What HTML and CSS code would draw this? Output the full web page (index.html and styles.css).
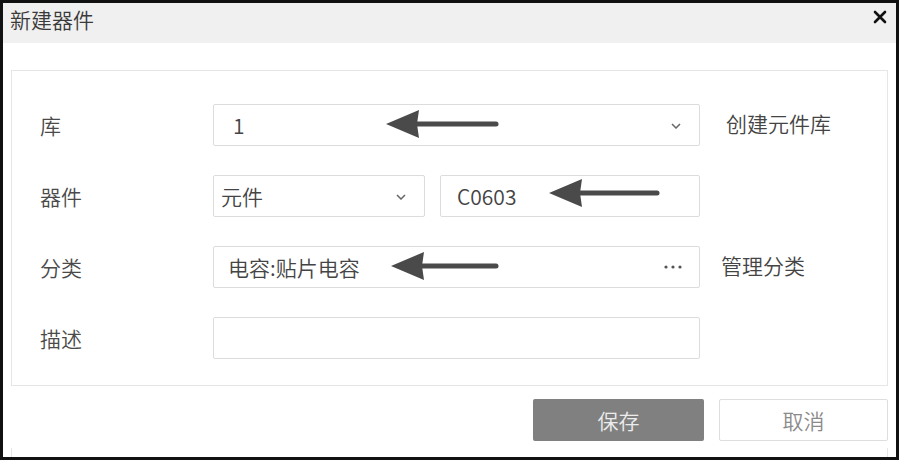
FILE: index.html
```html
<!DOCTYPE html>
<html>
    <head>
        <meta charset="utf-8" />
        <title>新建器件</title>
        <link rel="stylesheet" href="styles.css">
    </head>

    <body>
        <div class="m-dialog">
            <div class="hd">
                <span class="title">新建器件</span>
                <svg class="close" width="14" height="14" viewBox="0 0 14 14"><path d="M2 2L12 12M12 2L2 12" stroke="#111" stroke-width="2.6" stroke-linecap="round"/></svg>
            </div>

            <div class="bd">
                <div class="row">
                    <span class="label">库</span>
                    <div class="field w-full">
                        <span class="val pl-19">1</span>
                        <svg class="chev" width="10" height="6" viewBox="0 0 10 6"><path d="M1 1L5 5L9 1" fill="none" stroke="#666" stroke-width="1.5"/></svg>
                        <svg class="arrow" style="left:172px;top:5px" width="116" height="28" viewBox="0 0 116 28"><polygon points="0,14 33,0 31,14 33,28" fill="#4a4a4a"/><path d="M30 14L110 14" stroke="#4a4a4a" stroke-width="5" stroke-linecap="round"/></svg>
                    </div>
                    <a class="link ml-26">创建元件库</a>
                </div>

                <div class="row">
                    <span class="label">器件</span>
                    <div class="field w-sel">
                        <span class="val pl-8">元件</span>
                        <svg class="chev" width="10" height="6" viewBox="0 0 10 6"><path d="M1 1L5 5L9 1" fill="none" stroke="#666" stroke-width="1.5"/></svg>
                    </div>
                    <div class="field w-code">
                        <span class="val pl-16">C0603</span>
                        <svg class="arrow" style="left:108px;top:3px" width="116" height="28" viewBox="0 0 116 28"><polygon points="0,14 33,0 31,14 33,28" fill="#4a4a4a"/><path d="M30 14L108 14" stroke="#4a4a4a" stroke-width="5" stroke-linecap="round"/></svg>
                    </div>
                </div>

                <div class="row">
                    <span class="label">分类</span>
                    <div class="field w-full">
                        <span class="val pl-15">电容:贴片电容</span>
                        <svg class="dots" width="18" height="4" viewBox="0 0 18 4"><circle cx="2" cy="2" r="1.6" fill="#555"/><circle cx="9" cy="2" r="1.6" fill="#555"/><circle cx="16" cy="2" r="1.6" fill="#555"/></svg>
                        <svg class="arrow" style="left:177px;top:5px" width="116" height="28" viewBox="0 0 116 28"><polygon points="0,14 33,0 31,14 33,28" fill="#4a4a4a"/><path d="M30 14L105 14" stroke="#4a4a4a" stroke-width="5" stroke-linecap="round"/></svg>
                    </div>
                    <a class="link ml-21">管理分类</a>
                </div>

                <div class="row">
                    <span class="label">描述</span>
                    <div class="field w-full"></div>
                </div>
            </div>

            <div class="ft">
                <span class="btn btn-save">保存</span>
                <span class="btn btn-cancel">取消</span>
            </div>

            <div class="next"></div>
        </div>
    </body>
</html>
```

FILE: styles.css
```css
*{margin:0;padding:0;box-sizing:border-box;}
body{background:#fff;font-family:"Noto Sans CJK SC","Noto Sans",sans-serif;font-size:21px;font-weight:350;color:#444;}

.m-dialog{width:899px;height:460px;border:3px solid #111;display:flex;flex-direction:column;}
.m-dialog .hd{height:40px;background:#f0f0f0;display:flex;align-items:center;justify-content:space-between;padding:0 9px 0 7px;}
.m-dialog .hd .title{color:#3a3a3a;line-height:1;margin-top:-8px;}
.m-dialog .hd .close{margin-top:-12px;}

.m-dialog .bd{margin:27px 8px 0;height:316px;border:1px solid #e6e6e6;padding:33px 0 0 28px;display:flex;flex-direction:column;gap:29px;}
.m-dialog .row{display:flex;align-items:center;height:42px;}
.m-dialog .label{width:173px;color:#4a4a4a;}
.m-dialog .field{position:relative;height:42px;border:1px solid #dcdcdc;border-radius:2px;display:flex;align-items:center;justify-content:space-between;padding-right:16px;}
.m-dialog .w-full{width:487px;}
.m-dialog .w-sel{width:212px;padding-right:16px;}
.m-dialog .w-code{width:260px;margin-left:15px;}
.m-dialog .val{color:#444;}
.m-dialog .pl-19{padding-left:19px;}
.m-dialog .pl-8{padding-left:7px;}
.m-dialog .pl-16{padding-left:16px;}
.m-dialog .pl-15{padding-left:14px;}
.m-dialog .chev{margin-top:2px;margin-right:2px;}
.m-dialog .dots{margin-right:1px;}
.m-dialog .arrow{position:absolute;}
.m-dialog .link{color:#444;margin-top:-4px;}
.m-dialog .ml-26{margin-left:26px;}
.m-dialog .ml-21{margin-left:21px;}

.m-dialog .ft{display:flex;justify-content:flex-end;gap:15px;margin:13px 8px 0;}
.m-dialog .btn{height:42px;display:flex;align-items:center;justify-content:center;border-radius:2px;}
.m-dialog .btn-save{width:171px;background:#808080;color:#ececec;}
.m-dialog .btn-cancel{width:169px;border:1px solid #dedede;color:#8a8a8a;}

.m-dialog .next{flex:1;margin:7px 8px 0;border-left:1px solid #e6e6e6;border-right:1px solid #e6e6e6;}
```
